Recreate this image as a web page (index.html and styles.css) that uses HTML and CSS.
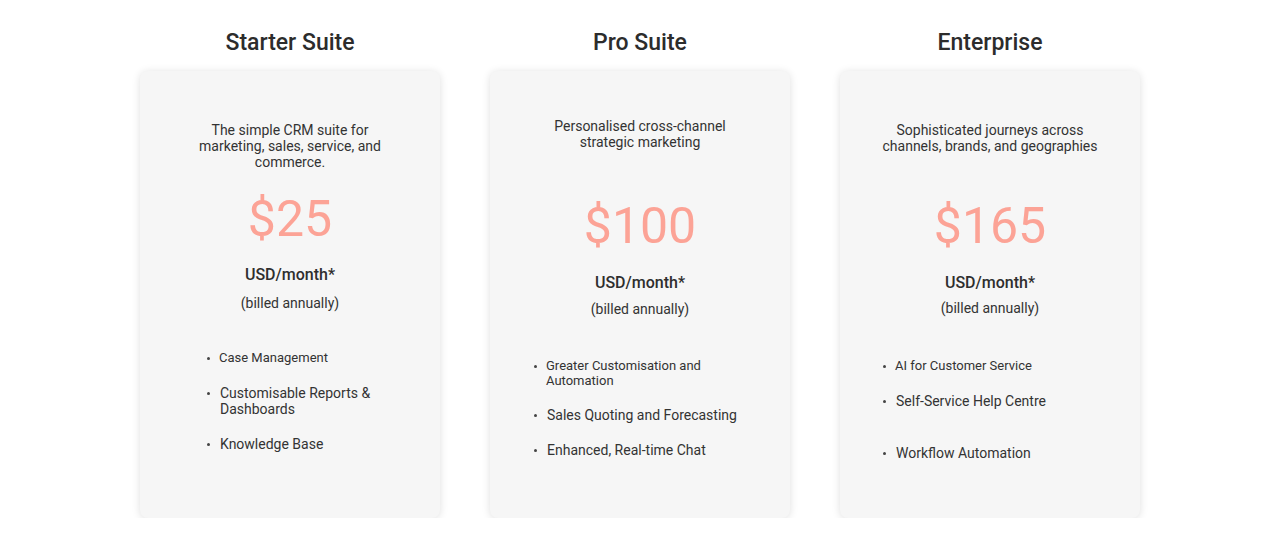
FILE: index.html
```html
<!DOCTYPE html>
<html lang="en">
<head>
<meta charset="utf-8">
<title>Pricing</title>
<link rel="stylesheet" href="styles.css">
</head>
<body>
<main class="plans">
  <section class="plan plan--starter">
    <h2 class="plan-title">Starter Suite</h2>
    <div class="card">
      <p class="desc">The simple CRM suite for<br>marketing, sales, service, and<br>commerce.</p>
      <div class="price">$25</div>
      <div class="unit">USD/month*</div>
      <div class="billed">(billed annually)</div>
      <ul class="features">
        <li class="feature feature--sm">Case Management</li>
        <li class="feature">Customisable Reports &amp;<br>Dashboards</li>
        <li class="feature">Knowledge Base</li>
      </ul>
    </div>
  </section>
  <section class="plan plan--pro">
    <h2 class="plan-title">Pro Suite</h2>
    <div class="card">
      <p class="desc">Personalised cross-channel<br>strategic marketing</p>
      <div class="price">$100</div>
      <div class="unit">USD/month*</div>
      <div class="billed">(billed annually)</div>
      <ul class="features">
        <li class="feature feature--sm">Greater Customisation and<br>Automation</li>
        <li class="feature">Sales Quoting and Forecasting</li>
        <li class="feature">Enhanced, Real-time Chat</li>
      </ul>
    </div>
  </section>
  <section class="plan plan--enterprise">
    <h2 class="plan-title">Enterprise</h2>
    <div class="card">
      <p class="desc">Sophisticated journeys across<br>channels, brands, and geographies</p>
      <div class="price">$165</div>
      <div class="unit">USD/month*</div>
      <div class="billed">(billed annually)</div>
      <ul class="features">
        <li class="feature feature--sm">AI for Customer Service</li>
        <li class="feature">Self-Service Help Centre</li>
        <li class="feature feature--spaced">Workflow Automation</li>
      </ul>
    </div>
  </section>
</main>
</body>
</html>
```

FILE: styles.css
```css
* { box-sizing: border-box; }

html, body {
  margin: 0;
  padding: 0;
  background: #ffffff;
}

body {
  font-family: Roboto, "Liberation Sans", Arial, sans-serif;
  color: #333333;
}

.plans {
  display: flex;
  justify-content: center;
  gap: 50px;
  padding-top: 29px;
}

.plan {
  width: 300px;
  display: flex;
  flex-direction: column;
  align-items: stretch;
}

.plan-title {
  margin: 0 0 14px;
  font-size: 23px;
  line-height: 28px;
  font-weight: 500;
  text-align: center;
  color: #2c2c2c;
}

.card {
  height: 447px;
  background: #f6f6f6;
  border-radius: 8px;
  box-shadow: 0 1px 8px rgba(0, 0, 0, 0.13);
  display: flex;
  flex-direction: column;
  align-items: center;
  text-align: center;
  padding-top: 51px;
}

.desc {
  margin: 0;
  font-size: 14px;
  line-height: 16px;
  color: #333333;
}

.price {
  font-size: 50px;
  line-height: 58px;
  font-weight: 400;
  color: #fca396;
  margin-top: 20px;
}

.unit {
  font-size: 16px;
  line-height: 20px;
  font-weight: 500;
  color: #2e2e2e;
  margin-top: 17px;
}

.billed {
  font-size: 14px;
  line-height: 18px;
  color: #333333;
  margin-top: 9px;
}

.features {
  list-style: none;
  margin: 38px 0 0;
  padding: 0;
  align-self: flex-start;
  text-align: left;
  display: flex;
  flex-direction: column;
  gap: 19px;
}

.feature {
  position: relative;
  padding-left: 13px;
  font-size: 14px;
  line-height: 16px;
  color: #333333;
}

.feature::before {
  content: "";
  position: absolute;
  left: 0;
  top: 7px;
  width: 3px;
  height: 3px;
  border-radius: 50%;
  background: #444444;
}

.feature--sm {
  font-size: 13px;
  padding-left: 12px;
}

.feature--spaced {
  margin-top: 17px;
}

/* per-plan spacing */
.plan--starter .features { margin-left: 67px; }

.plan--pro .card { padding-top: 47px; }
.plan--pro .price { margin-top: 47px; }
.plan--pro .unit { margin-top: 18px; }
.plan--pro .billed { margin-top: 7px; }
.plan--pro .features { margin-top: 40px; margin-left: 44px; }
.plan--pro .feature--sm { line-height: 15px; }

.plan--enterprise .price { margin-top: 43px; }
.plan--enterprise .unit { margin-top: 18px; }
.plan--enterprise .billed { margin-top: 6px; }
.plan--enterprise .features { margin-top: 41px; margin-left: 43px; }
```
